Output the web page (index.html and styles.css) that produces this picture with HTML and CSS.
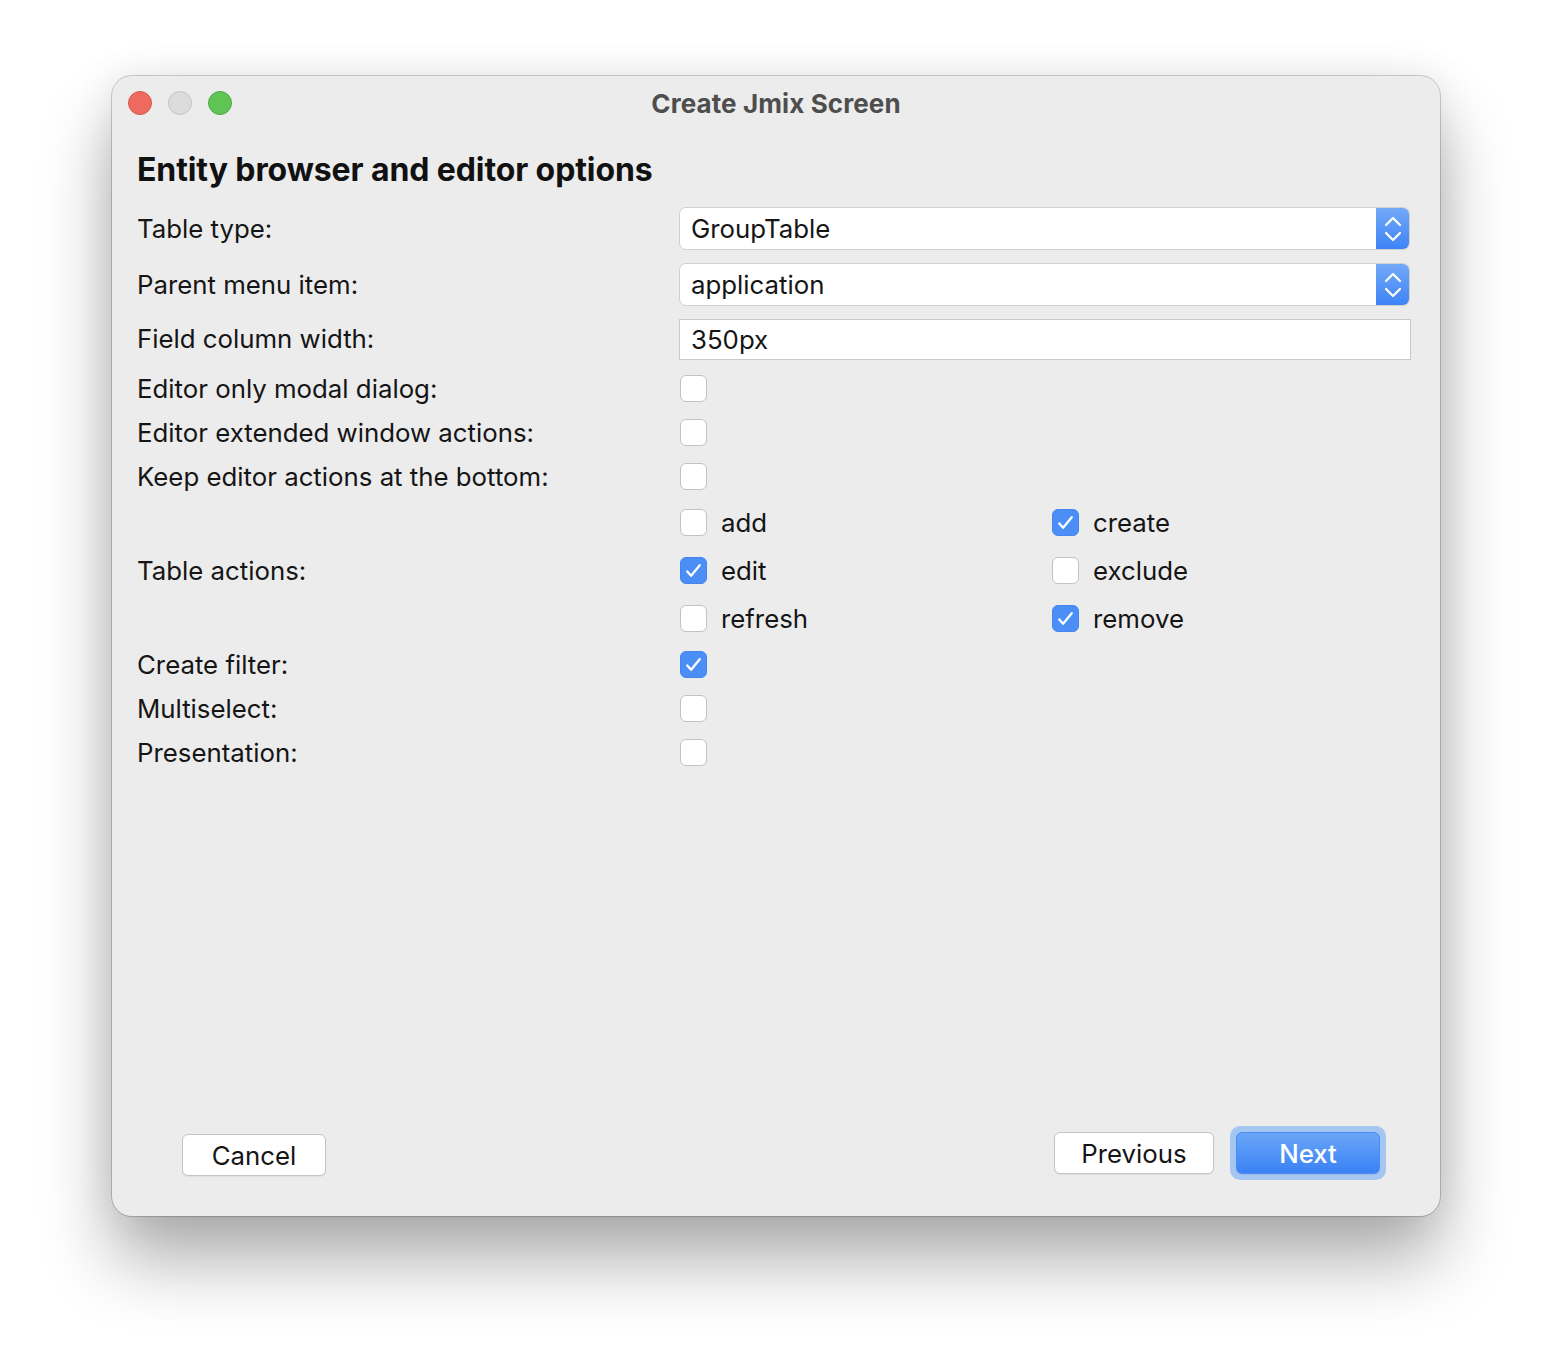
FILE: index.html
```html
<!DOCTYPE html>
<html>
<head>
<meta charset="utf-8">
<link rel="stylesheet" href="styles.css">
</head>
<body>
<div class="window">
  <div class="titlebar">
    <div class="lights">
      <span class="light red"></span>
      <span class="light gray"></span>
      <span class="light green"></span>
    </div>
    <div class="title">Create Jmix Screen</div>
  </div>
  <div class="content">
    <h1 class="heading">Entity browser and editor options</h1>
    <div class="form">
      <div class="label r-sel">Table type:</div>
      <div class="ctrl r-sel">
        <div class="select"><span class="sel-text">GroupTable</span><span class="sel-btn"><svg width="20" height="28" viewBox="0 0 20 28"><path d="M3 10 L10 3 L17 10 M3 18 L10 25 L17 18" fill="none" stroke="#fff" stroke-width="2.2" stroke-linecap="round" stroke-linejoin="round"/></svg></span></div>
      </div>
      <div class="label r-sel">Parent menu item:</div>
      <div class="ctrl r-sel">
        <div class="select"><span class="sel-text">application</span><span class="sel-btn"><svg width="20" height="28" viewBox="0 0 20 28"><path d="M3 10 L10 3 L17 10 M3 18 L10 25 L17 18" fill="none" stroke="#fff" stroke-width="2.2" stroke-linecap="round" stroke-linejoin="round"/></svg></span></div>
      </div>
      <div class="label r-inp">Field column width:</div>
      <div class="ctrl r-inp"><div class="input">350px</div></div>

      <div class="label r-cb">Editor only modal dialog:</div>
      <div class="ctrl r-cb"><span class="cb"></span></div>
      <div class="label r-cb">Editor extended window actions:</div>
      <div class="ctrl r-cb"><span class="cb"></span></div>
      <div class="label r-cb">Keep editor actions at the bottom:</div>
      <div class="ctrl r-cb"><span class="cb"></span></div>

      <div class="label actions-label">Table actions:</div>
      <div class="ctrl actions">
        <div class="act"><span class="cb"></span><span>add</span></div>
        <div class="act"><span class="cb on"><svg width="26" height="26" viewBox="0 0 26 26"><path d="M6.5 13.5 L10.5 18 L19.5 7" fill="none" stroke="#fff" stroke-width="2.4" stroke-linecap="round" stroke-linejoin="round"/></svg></span><span>create</span></div>
        <div class="act"><span class="cb on"><svg width="26" height="26" viewBox="0 0 26 26"><path d="M6.5 13.5 L10.5 18 L19.5 7" fill="none" stroke="#fff" stroke-width="2.4" stroke-linecap="round" stroke-linejoin="round"/></svg></span><span>edit</span></div>
        <div class="act"><span class="cb"></span><span>exclude</span></div>
        <div class="act"><span class="cb"></span><span>refresh</span></div>
        <div class="act"><span class="cb on"><svg width="26" height="26" viewBox="0 0 26 26"><path d="M6.5 13.5 L10.5 18 L19.5 7" fill="none" stroke="#fff" stroke-width="2.4" stroke-linecap="round" stroke-linejoin="round"/></svg></span><span>remove</span></div>
      </div>

      <div class="label r-cb">Create filter:</div>
      <div class="ctrl r-cb"><span class="cb on"><svg width="26" height="26" viewBox="0 0 26 26"><path d="M6.5 13.5 L10.5 18 L19.5 7" fill="none" stroke="#fff" stroke-width="2.4" stroke-linecap="round" stroke-linejoin="round"/></svg></span></div>
      <div class="label r-cb">Multiselect:</div>
      <div class="ctrl r-cb"><span class="cb"></span></div>
      <div class="label r-cb">Presentation:</div>
      <div class="ctrl r-cb"><span class="cb"></span></div>
    </div>
    <div class="spacer"></div>
    <div class="footer">
      <button class="btn cancel">Cancel</button>
      <div class="right">
        <button class="btn prev">Previous</button>
        <span class="ring"><button class="btn next">Next</button></span>
      </div>
    </div>
  </div>
</div>
</body>
</html>
```

FILE: styles.css
```css
html, body {
  margin: 0;
  padding: 0;
  background: #ffffff;
}
body {
  width: 1552px;
  height: 1364px;
  font-family: Inter, "Noto Sans", "Liberation Sans", sans-serif;
  color: #111;
  overflow: hidden;
}
.window {
  box-sizing: border-box;
  margin: 76px 0 0 112px;
  width: 1328px;
  height: 1140px;
  background: #ececec;
  border-radius: 20px;
  box-shadow: 0 0 0 1px rgba(0,0,0,0.18), 0 44px 70px rgba(0,0,0,0.32), 0 0 40px rgba(0,0,0,0.08);
  display: flex;
  flex-direction: column;
}
.titlebar {
  position: relative;
  height: 56px;
  display: flex;
  align-items: center;
  justify-content: center;
}
.lights {
  position: absolute;
  left: 16px;
  top: 15px;
  display: flex;
  gap: 16px;
}
.light {
  width: 22px;
  height: 22px;
  border-radius: 50%;
  border: 1px solid rgba(0,0,0,0.12);
}
.red { background: #ee6a5f; border-color: #d9574d; }
.gray { background: #dcdcdc; border-color: #c4c4c4; }
.green { background: #5fc454; border-color: #4ea844; }
.title {
  font-size: 26px;
  font-weight: 700;
  color: #4e4e4e;
  margin-top: -2px;
  letter-spacing: 0.1px;
}
.content {
  flex: 1;
  display: flex;
  flex-direction: column;
  padding: 0 30px 40px 25px;
}
.heading {
  margin: 18px 0 0 0;
  font-size: 32px;
  font-weight: 700;
  line-height: 40px;
  color: #111;
  letter-spacing: -0.1px;
}
.form {
  margin-top: 17px;
  display: grid;
  grid-template-columns: 542px 1fr;
  grid-auto-rows: auto;
}
.label {
  font-size: 25.8px;
  display: flex;
  align-items: center;
  color: #151515;
}
.ctrl {
  display: flex;
  align-items: center;
}
.r-sel { height: 56px; }
.r-sel.ctrl { align-items: flex-start; }
.r-sel.label { align-items: flex-start; padding-top: 6px; box-sizing: border-box; }
.r-inp { height: 47px; }
.r-inp.ctrl { align-items: flex-start; }
.r-inp.label { align-items: flex-start; padding-top: 4px; box-sizing: border-box; }
.r-cb { height: 44px; }
.select {
  box-sizing: border-box;
  width: 731px;
  height: 43px;
  background: #fff;
  border: 1px solid #cfcfcf;
  border-radius: 7px;
  display: flex;
  align-items: center;
  overflow: hidden;
}
.sel-text {
  flex: 1;
  font-size: 25.8px;
  padding-left: 11px;
  color: #151515;
}
.sel-btn {
  width: 34px;
  height: 43px;
  margin: -1px -1px -1px 0;
  background: linear-gradient(#74a9f7, #3d83f6);
  border-radius: 0 7px 7px 0;
  display: flex;
  align-items: center;
  justify-content: center;
}
.input {
  box-sizing: border-box;
  width: 732px;
  height: 41px;
  background: #fff;
  border: 1px solid #c9c9c9;
  font-size: 25.8px;
  padding-left: 11px;
  display: flex;
  align-items: center;
  color: #151515;
}
.cb {
  box-sizing: border-box;
  width: 27px;
  height: 27px;
  margin-left: 1px;
  border: 1px solid #c2c2c2;
  border-radius: 6px;
  background: #fff;
  display: inline-flex;
  flex-shrink: 0;
}
.cb.on {
  background: #4a8ef6;
  border-color: #4585ee;
}
.actions-label {
  height: 144px;
}
.actions {
  display: grid;
  grid-template-columns: 372px 1fr;
  grid-auto-rows: 48px;
}
.act {
  display: flex;
  align-items: center;
  gap: 14px;
  font-size: 25.8px;
  color: #151515;
}
.spacer { flex: 1; }
.footer {
  display: flex;
  align-items: flex-end;
  justify-content: space-between;
  padding-left: 45px;
  padding-right: 24px;
}
.btn {
  font-family: inherit;
  font-size: 25.8px;
  background: #fff;
  color: #151515;
  border: 1px solid #c4c4c4;
  border-radius: 6px;
  height: 42px;
  padding: 0;
  box-shadow: 0 1px 1px rgba(0,0,0,0.06);
}
.cancel { width: 144px; }
.right {
  display: flex;
  align-items: center;
  gap: 16px;
  margin-bottom: -4px;
}
.prev { width: 160px; }
.ring {
  display: inline-flex;
  padding: 6px;
  border-radius: 10px;
  background: #a6c6f2;
}
.next {
  width: 144px;
  background: linear-gradient(#6aa6f8, #3a81f5);
  border: 1px solid #4b8df0;
  color: #fff;
  font-weight: 500;
}
```
